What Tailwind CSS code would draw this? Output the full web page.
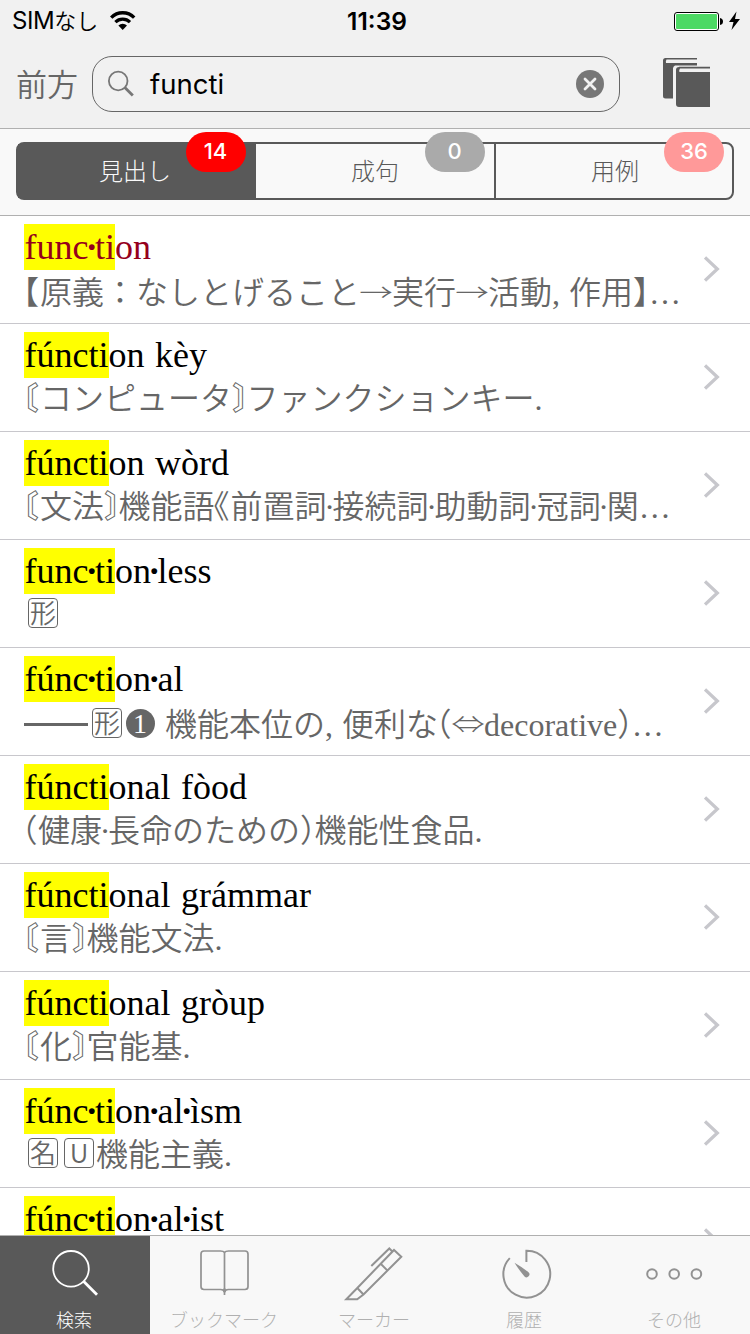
<!DOCTYPE html>
<html lang="ja">
<head>
<meta charset="utf-8">
<title>辞書検索</title>
<script src="https://cdn.jsdelivr.net/npm/@tailwindcss/browser@4"></script>
</head>
<body class="bg-white">
<div class="w-[750px] h-[1334px] flex flex-col overflow-hidden font-['Inter','Noto_Sans_CJK_JP',sans-serif]">

  <header class="h-[129px] shrink-0 bg-[#f1f1f1] border-b border-[#b0b0b0] flex flex-col">
    <div class="h-10 grid grid-cols-3 items-center text-[24.500px] leading-10 text-black">
      <div class="flex items-center pl-3">
        <span class="w-[98px] whitespace-nowrap font-[350] text-[22px]"><span class="font-normal text-[24px] tracking-[-0.4px]">SIM</span>なし</span>
        <svg class="w-[26px] h-[20px]" viewBox="110 10 26 20" fill="none" stroke="#000"><path d="M111.2 16.6a16.2 16.2 0 0 1 23 0" stroke-width="3.4"/><path d="M115.4 21.2a10.4 10.4 0 0 1 14.6 0" stroke-width="3.2"/><path d="M118.4 24.6a6.2 6.2 0 0 1 8.600 0l-4.300 4.400z" fill="#000" stroke="none"/></svg>
      </div>
      <div class="text-center font-semibold pl-1 pt-px">11:39</div>
      <div class="flex justify-end pr-2">
        <svg class="w-[70px] h-[20px]" viewBox="672 10 70 20"><rect x="674.5" y="11.5" width="44" height="18" rx="2.5" fill="#fff" stroke="#000" stroke-width="1"/><rect x="676" y="13" width="41" height="15" rx="1" fill="#4cd964"/><path d="M720 17q3 .5 3 3.500t-3 3.500z"/><path d="M736.500 10.500l-7.500 10.500h4.500l-2 8 8.500-11h-5z"/></svg>
      </div>
    </div>
    <div class="flex-1 flex items-start pt-4 pl-4">
      <span class="w-[76px] text-[31px] leading-[57px] font-[350] text-[#666] whitespace-nowrap">前方</span>
      <div class="w-[528px] h-14 rounded-[20px] border-[1.5px] border-[#666] flex items-center pl-3 pr-[15px]">
        <svg class="w-8 h-8" viewBox="105 68 32 32" fill="none" stroke="#777"><circle cx="118.200" cy="81" r="9.300" stroke-width="1.800"/><path d="M124.800 87.600l8 8" stroke-width="2.800"/></svg>
        <span class="flex-1 pl-[13px] text-[27.5px] leading-[54px] text-black">functi</span>
        <svg class="w-7 h-7" viewBox="0 0 28 28"><circle cx="14" cy="14" r="14" fill="#777"/><path d="M9 9l10 10M19 9L9 19" stroke="#f1f1f1" stroke-width="2.800" stroke-linecap="round"/></svg>
      </div>
      <svg class="w-[52px] h-14 ml-[42px]" viewBox="662 56 52 56" fill="#595959"><path d="M665.500 58H697v1.500h-30.500q-1 1.500-.5 3.500H697v2.500H675q-2 1-2 3V98.500h-7.500q-2.500 0-2.500-2.500V60.500q0-2.500 2.500-2.500z"/><path d="M679 66.800H710v1.700h-30q-1.300 1.500-.6 3.500H710v35H679q-3 0-3-3V70q0-3 3-3z"/></svg>
    </div>
  </header>

  <nav class="h-[87px] shrink-0 bg-[#f9f9f9] border-b border-[#b0b0b0] pt-[13px] px-4">
    <div class="h-[58px] rounded-lg border-2 border-[#595959] flex text-[24px] leading-[56px] font-light text-[#595959] text-center">
      <div class="relative w-[238px] pr-1 bg-[#595959] text-[#f9f9f9]">見出し
        <span class="absolute left-[167.500px] -top-3 w-[60px] h-10 rounded-full bg-[#f00] text-white text-[22px] leading-[39px] font-medium">14</span></div>
      <div class="relative w-[240px] border-r-2 border-[#595959]">成句
        <span class="absolute left-[168.500px] -top-3 w-[60px] h-10 rounded-full bg-[#aaa] text-white text-[22px] leading-[39px] font-medium">0</span></div>
      <div class="relative flex-1 pl-0.5">用例
        <span class="absolute left-[168px] -top-3 w-[60px] h-10 rounded-full bg-[#f99] text-white text-[22px] leading-[39px] font-medium">36</span></div>
    </div>
  </nav>

  <main id="list" class="flex-1 overflow-hidden bg-white text-black font-['Liberation_Serif','Noto_Sans_CJK_JP',serif]"></main>

  <footer class="h-[99px] shrink-0 border-t border-[#b0b0b0] bg-[#f8f8f8] grid grid-cols-5 text-[18px] leading-[30px] font-light text-[#b0b0b0] text-center">
    <div class="bg-[#595959] text-white">
      <svg class="w-[150px] h-[68px]" viewBox="0 1236 150 68" fill="none" stroke="#fff"><circle cx="71" cy="1268.800" r="17.800" stroke-width="1.800"/><path d="M83.500 1281.300l13.500 13.500" stroke-width="2.800"/></svg>
      <div class="pt-0.5 pr-0.5">検索</div>
    </div>
    <div>
      <svg class="w-[150px] h-[68px]" viewBox="150 1236 150 68" fill="none" stroke="#929292" stroke-width="1.700"><path d="M224.500 1252.500q-1-1.500-4-1.500h-16.500q-3 0-3 3v32.500q0 3 3 3h16.500q3.500 0 4 2.500q.5-2.500 4-2.500h16.500q3 0 3-3v-32.500q0-3-3-3h-16.500q-3 0-4 1.500zV1295"/><path d="M224.500 1287l2 3.500-2 3-2-3z" fill="#929292" stroke="none"/></svg>
      <div class="pt-0.5 pr-0.5">ブックマーク</div>
    </div>
    <div>
      <svg class="w-[150px] h-[68px]" viewBox="300 1236 150 68" fill="none" stroke="#929292" stroke-width="2"><path d="M357.300 1288l-11 11.300h10.900l6.300-4.800L401.300 1256.700l-7.300-6.700zl6.200 6.500M380.700 1263.800l6.800 6.800M371.300 1266l18-17.500 2.800 2.800"/></svg>
      <div class="pt-0.5 pr-0.5">マーカー</div>
    </div>
    <div>
      <svg class="w-[150px] h-[68px]" viewBox="450 1236 150 68" fill="none" stroke="#929292" stroke-width="2"><path d="M526.400 1262v-11.200a23.400 23.400 0 1 1-16.600 7.300"/><path d="M514.500 1262.800q6.500 3.700 14 9.400a2.700 2.700 0 1 1-4 4.200q-6-7-10-13.600z" fill="#929292" stroke="none"/></svg>
      <div class="pt-0.5 pr-0.5">履歴</div>
    </div>
    <div>
      <svg class="w-[150px] h-[68px]" viewBox="600 1236 150 68" fill="none" stroke="#929292" stroke-width="2"><circle cx="652" cy="1274" r="4.800"/><circle cx="674.200" cy="1274" r="4.800"/><circle cx="696.400" cy="1274" r="4.800"/></svg>
      <div class="pt-0.5 pr-0.5">その他</div>
    </div>
  </footer>
</div>

<script>
// Inline markup: [x] is a boxed label; brackets are set half-width; · is a tight middle dot
const box = c => `<span class="inline-block align-top mt-[6px] ml-1 mr-[2px] w-[30px] h-[30px] border-[1.5px] border-[#666] rounded-[4px] text-[26px] leading-[26px] text-center font-['Noto_Sans_CJK_JP']"><span class="-mx-1">${c}</span></span>`;
const open = c => c === '（'
  ? `<span class="-ml-[18.500px] mr-[0.500px] font-['Noto_Sans_CJK_JP']">${c}</span>`
  : `<span class="-ml-[17px] mr-px font-['Noto_Sans_CJK_JP']">${c}</span>`;
const close = c => c === '】'
  ? `<span class="-mr-4 font-['Noto_Sans_CJK_JP']">${c}</span>`
  : `<span class="-mr-[17.500px] font-['Noto_Sans_CJK_JP']">${c}</span>`;
const wide = c => `<span class="inline-block w-8 text-center font-light scale-x-105 scale-y-75 font-['Noto_Sans_CJK_JP']">${c}</span>`;
const one = `<span class="inline-block align-top mt-[7px] mx-[1.500px] w-[29px] h-[29px] rounded-full bg-[#666] text-white text-[28px] leading-[29px] text-center">1</span>`;
const strut = `<span class="font-['Noto_Sans_CJK_JP']">&#8203;</span>`;
const def = s => strut + s
  .replace(/[【〘《（]/g, open).replace(/[】〙）]/g, close).replace(/[→⇔]/g, wide)
  .replace(/·/g, '<span class="inline-flex justify-center w-[6px]">·</span>').replace(/\[(.)\]/g, (_, c) => box(c)).replace('❶', one)
  .replace('——', `<span class="inline-block align-top w-16 h-[3px] bg-[#666] mt-[21px]"></span>`);
const head = s => s.replace(/·/g, '<span class="inline-flex justify-center w-[6.500px] font-bold">·</span>');
const rows = [
  ['func·ti', 'on', '【原義：なしとげること→実行→活動, 作用】…'],
  ['fúncti', 'on kèy', '〘コンピュータ〙ファンクションキー.'],
  ['fúncti', 'on wòrd', '〘文法〙機能語《前置詞·接続詞·助動詞·冠詞·関…'],
  ['func·ti', 'on·less', '[形]'],
  ['fúnc·ti', 'on·al', '——[形]❶ 機能本位の, 便利な（⇔decorative）…'],
  ['fúncti', 'onal fòod', '（健康·長命のための）機能性食品.'],
  ['fúncti', 'onal grámmar', '〘言〙機能文法.'],
  ['fúncti', 'onal gròup', '〘化〙官能基.'],
  ['fúnc·ti', 'on·al·ìsm', '[名][U]機能主義.'],
  ['fúnc·ti', 'on·al·ist', '[名]'],
];
document.getElementById('list').innerHTML = rows.map(([a, b, d], i) => `
  <div class="h-[108px] border-b border-[#c8c7cc] pl-6 pr-[30px] pt-2 flex justify-between overflow-hidden">
    <div>
      <div class="h-[46px] text-[36px] leading-[46px] whitespace-nowrap [word-spacing:1.500px] ${i ? '' : 'text-[#95001c]'}"><span class="inline-block h-[46px] bg-[#ff0] pl-[0.500px] pr-[0.500px] -mr-[0.500px]">${head(a)}</span><span class="relative">${head(b)}</span></div>
      <div class="${i === 0 || i === 4 ? '' : '-mt-[2px]'} h-10 text-[32px] leading-10 font-[350] text-[#666] whitespace-nowrap [word-spacing:1px] [text-spacing-trim:space-all]">${def(d)}</div>
    </div>
    <svg class="w-4 h-[26px] mt-8 shrink-0" viewBox="0 0 16 26" fill="none" stroke="#c7c7cc" stroke-width="3.300"><path d="M1 1.500L13.300 13 1 24.500"/></svg>
  </div>`).join('');
</script>
</body>
</html>
